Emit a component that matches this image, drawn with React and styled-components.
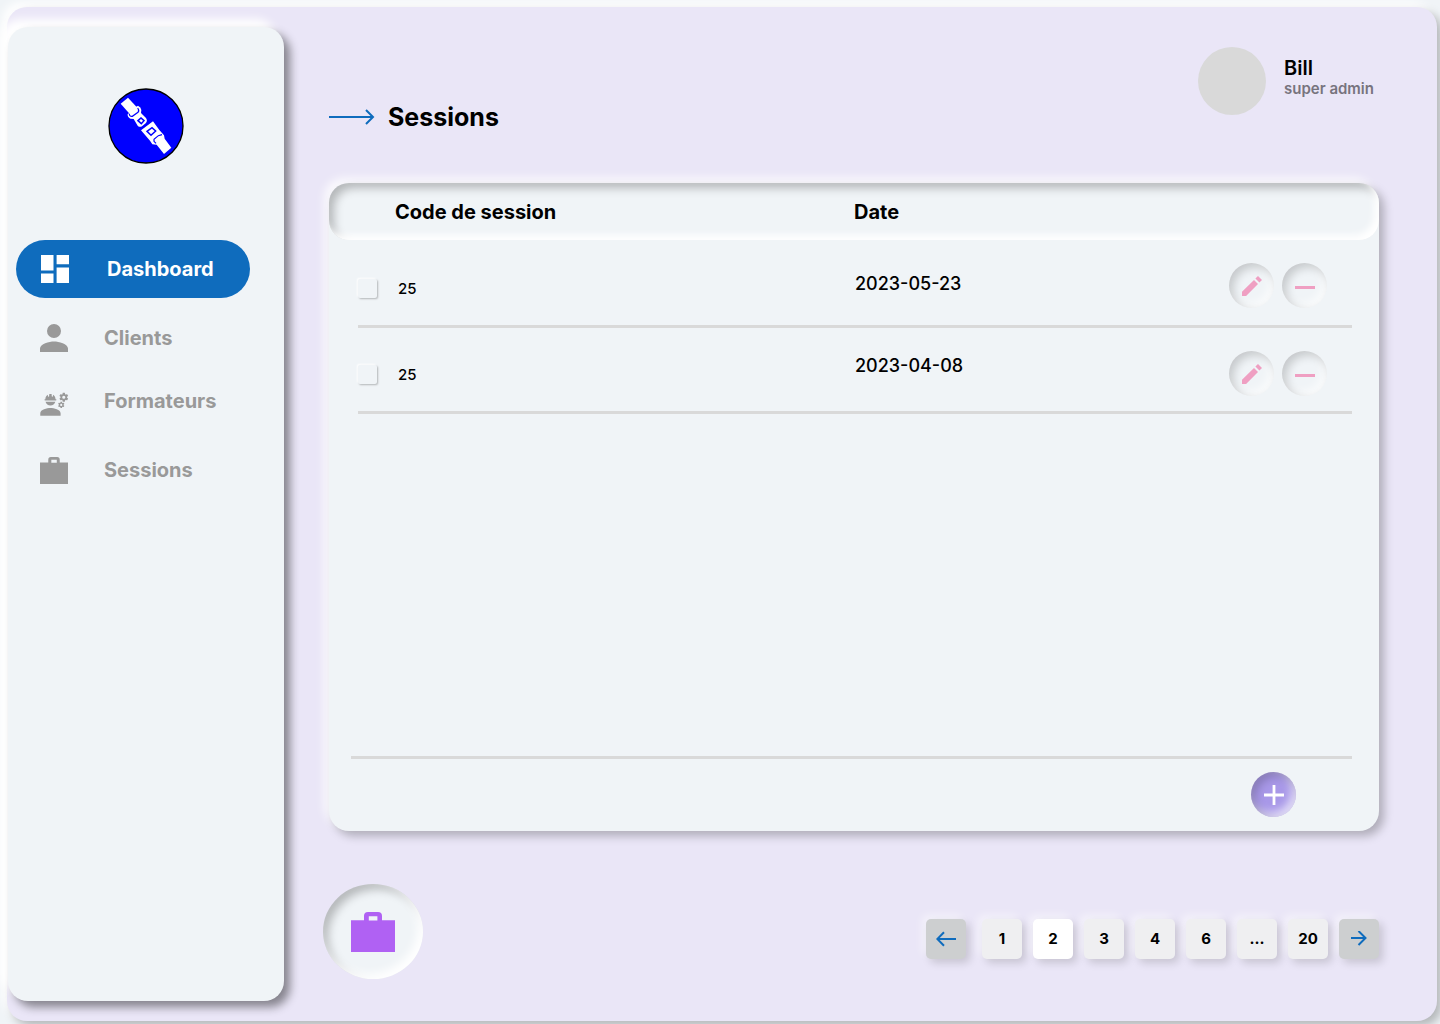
import React from "react";
import styled, { createGlobalStyle } from "styled-components";
import { MdEngineering } from "react-icons/md";

const Global = createGlobalStyle`
  * { box-sizing: border-box; }
  html, body { margin: 0; height: 100%; overflow: hidden; }
  body {
    background: #f0f4f7;
    font-family: Inter, "Liberation Sans", sans-serif;
    color: #000;
  }
  button { font: inherit; border: 0; padding: 0; cursor: pointer; }
`;

const Screen = styled.div`
  width: 1440px;
  height: 1024px;
  padding: 7px 3px 3px 7px;
  overflow: hidden;
`;

const Frame = styled.div`
  display: flex;
  height: 1014px;
  padding: 20px 0 20px 1px;
  border-radius: 20px;
  background: #eae6f7;
  box-shadow: 5px 5px 10px rgba(0, 0, 0, 0.25), -5px -5px 10px #fff;
`;

const Sidebar = styled.aside`
  flex: none;
  width: 276px;
  height: 974px;
  padding: 61px 8px 0;
  border-radius: 20px;
  background: #f0f4f7;
  box-shadow: 6px 6px 10px rgba(0, 0, 0, 0.43), -8px -8px 10px #fff;
`;

const LogoBox = styled.div`
  display: flex;
  justify-content: center;
  height: 152px;
  svg { display: block; }
`;

const Nav = styled.nav`
  display: flex;
  flex-direction: column;
`;

const NavItem = styled.a`
  display: flex;
  align-items: center;
  width: 234px;
  height: ${(p) => p.$height}px;
  padding-left: ${(p) => (p.$active ? 25 : 24)}px;
  border-radius: 29px;
  background: ${(p) => (p.$active ? "#0f6cbd" : "transparent")};
  color: ${(p) => (p.$active ? "#fff" : "#999")};
  font-size: 20px;
  font-weight: 700;
  line-height: 24px;
`;

const NavIcon = styled.span`
  flex: none;
  display: flex;
  justify-content: center;
  width: 28px;
  margin-right: ${(p) => (p.$active ? 38 : 36)}px;
  padding-top: ${(p) => p.$drop || 0}px;
  svg { display: block; flex: none; }
`;

const Main = styled.main`
  flex: 1;
  display: flex;
  flex-direction: column;
  padding: 0 58px 0 45px;
`;

const TopBar = styled.header`
  display: flex;
  justify-content: space-between;
  height: 156px;
`;

const Title = styled.h1`
  display: flex;
  align-items: center;
  gap: 13px;
  height: 32px;
  margin: 74px 0 0;
  font-size: 25px;
  font-weight: 700;
  svg { display: block; }
`;

const Profile = styled.div`
  display: flex;
  width: 181px;
  margin-top: 20px;
`;

const Avatar = styled.div`
  flex: none;
  width: 68px;
  height: 68px;
  margin-right: 18px;
  border-radius: 50%;
  background: #d9d9d9;
`;

const Identity = styled.div`
  padding-top: 9px;
  white-space: nowrap;
`;

const UserName = styled.div`
  font-size: 20px;
  font-weight: 600;
  line-height: 24px;
`;

const Role = styled.div`
  color: #77747e;
  font-size: 15px;
  font-weight: 600;
  line-height: 18px;
`;

const Card = styled.section`
  display: flex;
  flex-direction: column;
  height: 648px;
  border-radius: 20px;
  background: #f0f4f7;
  box-shadow: 5px 5px 10px rgba(0, 0, 0, 0.25), -5px -5px 10px rgba(255, 255, 255, 0.8);
`;

const TableHead = styled.div`
  display: grid;
  grid-template-columns: 459px 1fr;
  align-items: center;
  flex: none;
  height: 57px;
  padding-left: 66px;
  border-radius: 20px;
  font-size: 20px;
  font-weight: 700;
  box-shadow: inset -5px -5px 7px #fff, inset 5px 5px 10px rgba(0, 0, 0, 0.25);
`;

const Row = styled.div`
  display: grid;
  grid-template-columns: 40px 457px 374px 98px;
  height: ${(p) => p.$height}px;
  margin: 0 27px 0 29px;
  border-bottom: 3px solid #d9d9d9;
`;

const Check = styled.span`
  width: 19px;
  height: 19px;
  margin-top: ${(p) => p.$top}px;
  border-radius: 2px;
  background: #f0f4f7;
  box-shadow: 1px 1px 2px rgba(0, 0, 0, 0.25), -1px -1px 2px #fff;
`;

const Code = styled.span`
  margin-top: ${(p) => p.$top}px;
  font-size: 15px;
  font-weight: 500;
  line-height: 18px;
`;

const DateText = styled.span`
  margin-top: ${(p) => p.$top}px;
  font-size: 18px;
  font-weight: 500;
  line-height: 22px;
`;

const Actions = styled.div`
  display: flex;
  gap: 8px;
  margin-top: 23px;
`;

const RoundButton = styled.button`
  display: flex;
  align-items: center;
  justify-content: center;
  width: 45px;
  height: 45px;
  border-radius: 50%;
  background: ${(p) => (p.$accent ? "#a898e8" : "#f0f4f7")};
  box-shadow: inset 4px 4px 10px rgba(0, 0, 0, ${(p) => (p.$accent ? 0.22 : 0.18)}),
    inset -4px -4px 10px rgba(255, 255, 255, 0.7);
  svg { display: block; }
`;

const CardFooter = styled.div`
  display: flex;
  justify-content: flex-end;
  height: 75px;
  margin: auto 27px 0 22px;
  padding: 13px 56px 0 0;
  border-top: 3px solid #d9d9d9;
`;

const Bottom = styled.footer`
  display: flex;
  justify-content: space-between;
  margin-left: -6px;
  padding-top: 53px;
`;

const Badge = styled.div`
  display: flex;
  justify-content: center;
  width: 100px;
  height: 95px;
  padding-top: 28px;
  border-radius: 50%;
  background: #f0f4f7;
  color: #b061f3;
  box-shadow: inset -5px -5px 10px #fff, inset 5px 5px 10px rgba(0, 0, 0, 0.25);
  svg { display: block; }
`;

const Pager = styled.div`
  display: flex;
  gap: 11px;
  padding-top: 35px;
`;

const PageButton = styled.button`
  display: flex;
  align-items: center;
  justify-content: center;
  width: 40px;
  height: 40px;
  margin-right: ${(p) => (p.$prev ? 5 : 0)}px;
  padding-bottom: ${(p) => (p.$arrow ? 0 : 2)}px;
  border-radius: 5px;
  background: ${(p) => (p.$arrow ? "#cdcfd0" : p.$current ? "#fff" : "#efeff1")};
  box-shadow: 4px 4px 8px rgba(0, 0, 0, 0.15), -4px -4px 8px rgba(255, 255, 255, 0.5);
  font-size: 15px;
  font-weight: 700;
  color: #000;
`;

const Logo = () => (
  <svg width="76" height="76" viewBox="54 54 228 228">
    <circle cx="168" cy="168" r="111" fill="#00f" stroke="#000" strokeWidth="4" />
    <path d="M92 101 114 83 142 113 120 133Z" fill="#fff" />
    <path
      d="M136 112 144 107Q153 111 154 120L153 129 168 144Q174 153 167 160L156 169Q149 173 143 167L131 147 121 146Q112 141 113 132L120 128Z"
      fill="#fff"
    />
    <path d="M118 131Q118 140 127 139L144 127Q149 122 143 114" fill="none" stroke="#00f" strokeWidth="3.5" />
    <path d="M144 152 153 144 162 152 154 161Z" fill="#fff" stroke="#00f" strokeWidth="4.5" />
    <path d="M153 181 189 154 208 180 222 196 224 206 244 233 222 252 200 224 187 223 180 212Z" fill="#fff" />
    <path d="M171 184 186 173 197 183 183 196Z" fill="#fff" stroke="#00f" strokeWidth="4.5" />
    <path d="M216 194 205 197 192 208 192 214 198 220" fill="none" stroke="#00f" strokeWidth="3.5" />
  </svg>
);

const DashboardIcon = () => (
  <svg width="28" height="28" viewBox="0 0 28 28" fill="currentColor">
    <path d="M0 0h12.5v15.4H0zM15.6 0H28v9.2H15.6zM0 18.6h12.5V28H0zM15.6 12.6H28V28H15.6z" />
  </svg>
);

const PersonIcon = () => (
  <svg width="28" height="28" viewBox="0 0 28 28" fill="currentColor">
    <path d="M14 14a7 7 0 1 0 0-14 7 7 0 0 0 0 14Zm0 3.5c-4.7 0-14 2.4-14 7V28h28v-3.5c0-4.6-9.3-7-14-7Z" />
  </svg>
);

const BagIcon = ({ width, height }) => (
  <svg width={width} height={height} viewBox="0 0 44 40" preserveAspectRatio="none" fill="currentColor">
    <path
      fillRule="evenodd"
      d="M13 8.3V4q0-4 4-4h10q4 0 4 4v4.3h13V40H0V8.3ZM17.8 4.2v4.3h8.6V4.2Z"
    />
  </svg>
);

const PencilIcon = () => (
  <svg width="20" height="20" viewBox="0 0 20 20" fill="#ef9fc2">
    <path d="M0 15.8 12 3.9 16 7.9 4.1 20H0ZM13.4 2.6 16 0 20 4 17.4 6.6Z" />
  </svg>
);

const MinusIcon = () => (
  <svg width="20" height="3" viewBox="0 0 20 3">
    <path d="M0 0h20v3H0z" fill="#ef9fc2" />
  </svg>
);

const PlusIcon = () => (
  <svg width="20" height="20" viewBox="0 0 20 20">
    <path d="M8.6 0h2.8v8.6H20v2.8h-8.6V20H8.6v-8.6H0V8.6h8.6z" fill="#fff" />
  </svg>
);

const LongArrow = () => (
  <svg width="46" height="16" viewBox="0 0 46 16" fill="none" stroke="#0f6cbd" strokeWidth="2">
    <path d="M0 8H44M37 1l7 7-7 7" />
  </svg>
);

const ShortArrow = ({ left }) => (
  <svg width="20" height="16" viewBox="0 0 20 16" fill="none" stroke="#0f6cbd" strokeWidth="2">
    {left ? <path d="M20 8H1.5M8 1.3 1.3 8 8 14.7" /> : <path d="M2 7h15M9.5 0l7 7-7 7" />}
  </svg>
);

const Glyph = styled.span`
  display: flex;
  padding: ${(p) => p.$drop}px 0 0 1px;
`;

const rows = [
  { code: "25", date: "2023-05-23", height: 88, check: 39, codeTop: 40, dateTop: 33 },
  { code: "25", date: "2023-04-08", height: 86, check: 37, codeTop: 38, dateTop: 27 },
];

const pages = ["1", "2", "3", "4", "6", "...", "20"];

export default function App() {
  return (
    <Screen>
      <Global />
      <Frame>
        <Sidebar>
          <LogoBox>
            <Logo />
          </LogoBox>
          <Nav>
            <NavItem $active $height={58}>
              <NavIcon $active><DashboardIcon /></NavIcon>
              Dashboard
            </NavItem>
            <NavItem $height={80}>
              <NavIcon><PersonIcon /></NavIcon>
              Clients
            </NavItem>
            <NavItem $height={46}>
              <NavIcon $drop={7}><MdEngineering size={30.5} /></NavIcon>
              Formateurs
            </NavItem>
            <NavItem $height={92}>
              <NavIcon><BagIcon width={28} height={27} /></NavIcon>
              Sessions
            </NavItem>
          </Nav>
        </Sidebar>
        <Main>
          <TopBar>
            <Title>
              <LongArrow />
              Sessions
            </Title>
            <Profile>
              <Avatar />
              <Identity>
                <UserName>Bill</UserName>
                <Role>super admin</Role>
              </Identity>
            </Profile>
          </TopBar>
          <Card>
            <TableHead>
              <span>Code de session</span>
              <span>Date</span>
            </TableHead>
            {rows.map((r) => (
              <Row key={r.date} $height={r.height}>
                <Check $top={r.check} />
                <Code $top={r.codeTop}>{r.code}</Code>
                <DateText $top={r.dateTop}>{r.date}</DateText>
                <Actions>
                  <RoundButton aria-label="Modifier"><Glyph $drop={1}><PencilIcon /></Glyph></RoundButton>
                  <RoundButton aria-label="Supprimer"><Glyph $drop={4}><MinusIcon /></Glyph></RoundButton>
                </Actions>
              </Row>
            ))}
            <CardFooter>
              <RoundButton $accent aria-label="Ajouter"><Glyph $drop={1}><PlusIcon /></Glyph></RoundButton>
            </CardFooter>
          </Card>
          <Bottom>
            <Badge>
              <BagIcon width={44} height={40} />
            </Badge>
            <Pager>
              <PageButton $arrow $prev aria-label="Précédent"><ShortArrow left /></PageButton>
              {pages.map((p) => (
                <PageButton key={p} $current={p === "2"}>{p}</PageButton>
              ))}
              <PageButton $arrow aria-label="Suivant"><ShortArrow /></PageButton>
            </Pager>
          </Bottom>
        </Main>
      </Frame>
    </Screen>
  );
}
